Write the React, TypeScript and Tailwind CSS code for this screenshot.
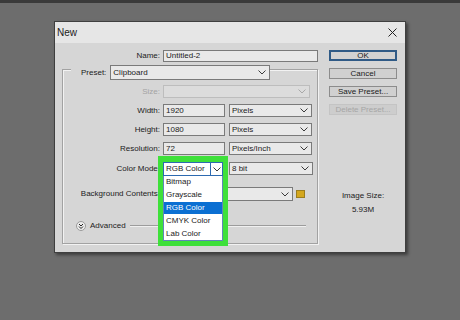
import clsx from "clsx";

const Chevron = ({ color = "#3a3a3a" }: { color?: string }) => (
  <svg width="8" height="5" viewBox="0 0 8 5" className="shrink-0">
    <polyline points="0.5,0.5 4,4 7.5,0.5" fill="none" stroke={color} strokeWidth="1" />
  </svg>
);

const Input = ({ value, className }: { value: string; className?: string }) => (
  <div
    className={clsx(
      "flex items-center border border-[#7a7a7a] bg-[#e9e9e9] pl-[2px] leading-none",
      className
    )}
  >
    {value}
  </div>
);

const Select = ({
  value,
  className,
  disabled,
}: {
  value?: string;
  className?: string;
  disabled?: boolean;
}) => (
  <div
    className={clsx(
      "flex items-center justify-between pl-[2px] pr-[3px] leading-none",
      disabled ? "border border-[#bdbdbd] bg-[#dcdcdc]" : "border border-[#7a7a7a] bg-[#e9e9e9]",
      className
    )}
  >
    <span>{value}</span>
    <Chevron color={disabled ? "#a8a8a8" : "#3a3a3a"} />
  </div>
);

const Row = ({
  label,
  children,
  className,
  muted,
}: {
  label: string;
  children: React.ReactNode;
  className?: string;
  muted?: boolean;
}) => (
  <div className={clsx("flex items-center", className)}>
    <span className={clsx("w-[97px] text-right leading-none", muted && "text-[#a3a3a3]")}>
      {label}
    </span>
    {children}
  </div>
);

const Button = ({
  label,
  focused,
  disabled,
}: {
  label: string;
  focused?: boolean;
  disabled?: boolean;
}) => (
  <div
    className={clsx(
      "flex h-[11px] w-[68px] items-center justify-center leading-none",
      focused && "border-2 border-[#2f5a86] bg-[#d2d2d2]",
      !focused && !disabled && "border border-[#8c8c8c] bg-[#d0d0d0]",
      disabled && "border border-[#c4c4c4] bg-[#cdcdcd] text-[#a6a6a6]"
    )}
  >
    {label}
  </div>
);

const modes = ["Bitmap", "Grayscale", "RGB Color", "CMYK Color", "Lab Color"];

export default function App() {
  return (
    <div className="h-[320px] w-[460px] overflow-hidden border-t-[3px] border-[#3a3a3a] bg-[#6d6d6d] font-['Liberation_Sans',Arial,sans-serif] text-[8px] text-[#1b1b1b]">
      <div className="ml-[54px] mt-[18px] flex h-[232px] w-[352px] flex-col border border-[#3f3f3f] bg-[#d6d6d6] shadow-[2px_2px_3px_rgba(0,0,0,0.45)]">
        {/* title bar */}
        <div className="flex h-[21px] items-center justify-between bg-[#e6e6e6] pl-[2px] pr-[8px]">
          <span className="text-[10px] leading-none">New</span>
          <svg width="9" height="9" viewBox="0 0 9 9">
            <path d="M0.5 0.5 L8.5 8.5 M8.5 0.5 L0.5 8.5" stroke="#222" strokeWidth="1" />
          </svg>
        </div>

        <div className="flex flex-1">
          {/* left column */}
          <div className="w-[264px] pl-[7px] pt-[7px]">
            <div className="flex h-[12px] items-center">
              <span className="w-[98px] text-right leading-none">Name:</span>
              <Input value="Untitled-2" className="ml-[3px] h-[12px] w-[155px]" />
            </div>

            <div className="mt-[7px] w-[256px] border border-[#a2a2a2] pb-[12px] shadow-[inset_1px_1px_0_#f2f2f2,1px_1px_0_#f2f2f2]">
              <div className="ml-[8px] -mt-[5px] flex h-[15px] items-center">
                <span className="bg-[#d6d6d6] pl-[10px] pr-[4px] leading-none">Preset:</span>
                <Select value="Clipboard" className="h-[15px] w-[160px]" />
              </div>

              <Row label="Size:" muted className="mt-[5px] h-[13px]">
                <Select disabled className="ml-[3px] h-[13px] w-[147px]" />
              </Row>
              <Row label="Width:" className="mt-[6px] h-[13px]">
                <Input value="1920" className="ml-[3px] h-[13px] w-[62px]" />
                <Select value="Pixels" className="ml-[4px] h-[13px] w-[83px]" />
              </Row>
              <Row label="Height:" className="mt-[6px] h-[13px]">
                <Input value="1080" className="ml-[3px] h-[13px] w-[62px]" />
                <Select value="Pixels" className="ml-[4px] h-[13px] w-[83px]" />
              </Row>
              <Row label="Resolution:" className="mt-[6px] h-[13px]">
                <Input value="72" className="ml-[3px] h-[13px] w-[62px]" />
                <Select value="Pixels/Inch" className="ml-[4px] h-[13px] w-[83px]" />
              </Row>
              <Row label="Color Mode:" className="mt-[7px] h-[13px]">
                <div className="relative ml-[3px] h-[13px] w-[60px]">
                  {/* open dropdown, highlighted */}
                  <div className="absolute -left-[5px] -top-[6px] z-10 w-[70px] bg-[#3ee03a] px-[5px] pb-[5px] pt-[6px]">
                    <div className="flex h-[14px] items-stretch border border-[#2d6ab0] bg-white leading-none">
                      <span className="flex flex-1 items-center pl-[2px]">RGB Color</span>
                      <span className="flex w-[12px] items-center justify-center border-l border-[#2d6ab0]">
                        <Chevron />
                      </span>
                    </div>
                    <div className="flex h-[65px] flex-col border border-t-0 border-[#5f86b8] bg-white">
                      {modes.map((m) => (
                        <div
                          key={m}
                          className={clsx(
                            "flex h-[13px] items-center pl-[2px] leading-none",
                            m === "RGB Color" && "bg-[#0b6fd2] text-white"
                          )}
                        >
                          {m}
                        </div>
                      ))}
                    </div>
                  </div>
                </div>
                <Select value="8 bit" className="ml-[6px] h-[13px] w-[84px]" />
              </Row>
              <Row label="Background Contents:" className="mt-[12px] h-[14px]">
                <Select className="ml-[3px] h-[14px] w-[130px]" />
                <div className="ml-[3px] h-[8px] w-[9px] border border-[#9b7d1e] bg-[#d4a71d]" />
              </Row>

              <div className="ml-[13px] mr-[11px] mt-[20px] flex h-[10px] items-center">
                <svg width="10" height="10" viewBox="0 0 10 10" className="shrink-0">
                  <circle cx="5" cy="5" r="4.5" fill="#ececec" stroke="#9a9a9a" />
                  <polyline points="3,3 5,5 7,3" fill="none" stroke="#222" strokeWidth="1" />
                  <polyline points="3,5.5 5,7.5 7,5.5" fill="none" stroke="#222" strokeWidth="1" />
                </svg>
                <span className="ml-[4px] leading-none">Advanced</span>
                <div className="ml-[4px] h-[2px] flex-1 border-t border-[#9c9c9c] bg-[#f0f0f0]" />
              </div>
            </div>
          </div>

          {/* right column */}
          <div className="ml-[10px] flex w-[68px] flex-col items-center pt-[7px]">
            <div className="flex flex-col gap-[7px]">
              <Button label="OK" focused />
              <Button label="Cancel" />
              <Button label="Save Preset..." />
              <Button label="Delete Preset..." disabled />
            </div>
            <span className="mt-[76px] leading-[10px]">Image Size:</span>
            <span className="mt-[4px] leading-[10px]">5.93M</span>
          </div>
        </div>
      </div>
    </div>
  );
}
